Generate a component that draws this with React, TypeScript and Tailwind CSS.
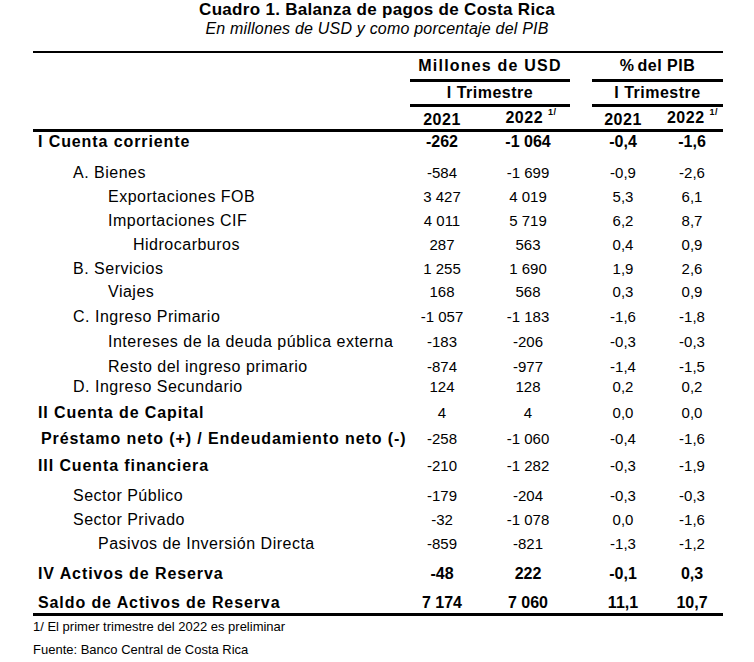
import React from "react";

type Row = {
  label: string;
  indent: string;
  bold?: boolean;
  boldNums?: boolean;
  h: string;
  vals: string[];
};

const rows: Row[] = [
  { label: "I Cuenta corriente", indent: "pl-[5px]", bold: true, boldNums: true, h: "h-[31px]", vals: ["-262", "-1 064", "-0,4", "-1,6"] },
  { label: "A. Bienes", indent: "pl-[40px]", h: "h-[24px]", vals: ["-584", "-1 699", "-0,9", "-2,6"] },
  { label: "Exportaciones FOB", indent: "pl-[75px]", h: "h-[24px]", vals: ["3 427", "4 019", "5,3", "6,1"] },
  { label: "Importaciones CIF", indent: "pl-[75px]", h: "h-[24px]", vals: ["4 011", "5 719", "6,2", "8,7"] },
  { label: "Hidrocarburos", indent: "pl-[100px]", h: "h-[24px]", vals: ["287", "563", "0,4", "0,9"] },
  { label: "B. Servicios", indent: "pl-[40px]", h: "h-[23px]", vals: ["1 255", "1 690", "1,9", "2,6"] },
  { label: "Viajes", indent: "pl-[75px]", h: "h-[25px]", vals: ["168", "568", "0,3", "0,9"] },
  { label: "C. Ingreso Primario", indent: "pl-[40px]", h: "h-[25px]", vals: ["-1 057", "-1 183", "-1,6", "-1,8"] },
  { label: "Intereses de la deuda pública externa", indent: "pl-[75px]", h: "h-[25px]", vals: ["-183", "-206", "-0,3", "-0,3"] },
  { label: "Resto del ingreso primario", indent: "pl-[75px]", h: "h-[20px]", vals: ["-874", "-977", "-1,4", "-1,5"] },
  { label: "D. Ingreso Secundario", indent: "pl-[40px]", h: "h-[26px]", vals: ["124", "128", "0,2", "0,2"] },
  { label: "II Cuenta de Capital", indent: "pl-[5px]", bold: true, h: "h-[26px]", vals: ["4", "4", "0,0", "0,0"] },
  { label: "Préstamo neto (+) / Endeudamiento neto (-)", indent: "pl-[8px]", bold: true, h: "h-[27px]", vals: ["-258", "-1 060", "-0,4", "-1,6"] },
  { label: "III Cuenta financiera", indent: "pl-[5px]", bold: true, h: "h-[30px]", vals: ["-210", "-1 282", "-0,3", "-1,9"] },
  { label: "Sector Público", indent: "pl-[40px]", h: "h-[24px]", vals: ["-179", "-204", "-0,3", "-0,3"] },
  { label: "Sector Privado", indent: "pl-[40px]", h: "h-[24px]", vals: ["-32", "-1 078", "0,0", "-1,6"] },
  { label: "Pasivos de Inversión Directa", indent: "pl-[65px]", h: "h-[30px]", vals: ["-859", "-821", "-1,3", "-1,2"] },
  { label: "IV Activos de Reserva", indent: "pl-[5px]", bold: true, boldNums: true, h: "h-[29px]", vals: ["-48", "222", "-0,1", "0,3"] },
  { label: "Saldo de Activos de Reserva", indent: "pl-[5px]", bold: true, boldNums: true, h: "h-[20px]", vals: ["7 174", "7 060", "11,1", "10,7"] },
];

const grid = "grid grid-cols-[371px_76px_96px_16px_62px_69px]";

export default function App() {
  return (
    <div className="w-[754px] h-[662px] bg-white text-black font-['Liberation_Sans',Arial,sans-serif]">
      {/* Title */}
      <div className="text-center">
        <div className="text-[17px] leading-[20px] font-bold tracking-[0.3px]">
          Cuadro 1. Balanza de pagos de Costa Rica
        </div>
        <div className="text-[16px] leading-[18px] italic tracking-[0.2px]">
          En millones de USD y como porcentaje del PIB
        </div>
      </div>

      <div className="ml-[33px] w-[690px] mt-[13px]">
        <div className="h-[2px] bg-black" />

        {/* Header */}
        <div className={`${grid} font-bold text-[16px]`}>
          <div className="row-span-5" />
          <div className="col-span-2 h-[26px] flex items-center justify-center tracking-[1.2px]">
            Millones de USD
          </div>
          <div />
          <div className="col-span-2 h-[26px] flex items-center justify-center tracking-[0.5px]">
            %<span className="ml-[3px]">del PIB</span>
          </div>

          <div className="col-span-2 h-[3px] bg-black ml-[6px] mr-[6px]" />
          <div />
          <div className="col-span-2 h-[3px] bg-black" />

          <div className="col-span-2 h-[22px] flex items-center justify-center tracking-[0.5px]">
            I Trimestre
          </div>
          <div />
          <div className="col-span-2 h-[22px] flex items-center justify-center tracking-[0.5px]">
            I Trimestre
          </div>

          <div className="col-span-2 h-[3px] bg-black ml-[6px] mr-[6px]" />
          <div />
          <div className="col-span-2 h-[3px] bg-black" />

          <div className="h-[22px] flex items-center justify-center tracking-[0.5px] pt-[4px]">2021</div>
          <div className="h-[22px] flex items-center justify-center tracking-[0.5px] pl-[6px]">
            2022<sup className="text-[9px] ml-[5px] -top-[6px]">1/</sup>
          </div>
          <div />
          <div className="h-[22px] flex items-center justify-center tracking-[0.5px] pt-[4px]">2021</div>
          <div className="h-[22px] flex items-center justify-center tracking-[0.5px] pl-[8px]">
            2022<sup className="text-[9px] ml-[5px] -top-[6px]">1/</sup>
          </div>
        </div>

        <div className="h-[3px] bg-black" />

        {/* Body */}
        {rows.map((r, i) => (
          <div key={i} className={`${grid} ${r.h} leading-[20px]`}>
            <div
              className={`${r.indent} whitespace-nowrap text-[16px] ${
                r.bold ? "font-bold tracking-[0.9px]" : "tracking-[0.5px]"
              }`}
            >
              {r.label}
            </div>
            {r.vals.map((v, j) => (
              <React.Fragment key={j}>
                {j === 2 && <div />}
                <div
                  className={`text-center whitespace-nowrap ${
                    r.boldNums ? "font-bold text-[16px]" : "text-[15px]"
                  } ${j === 3 ? "pl-[7px]" : ""}`}
                >
                  {v}
                </div>
              </React.Fragment>
            ))}
          </div>
        ))}

        <div className="h-[3px] bg-black" />

        {/* Notes */}
        <div className="text-[13px] leading-[20px] pt-[1px]">1/ El primer trimestre del 2022 es preliminar</div>
        <div className="text-[13px] leading-[20px] mt-[3px]">Fuente: Banco Central de Costa Rica</div>
      </div>
    </div>
  );
}
